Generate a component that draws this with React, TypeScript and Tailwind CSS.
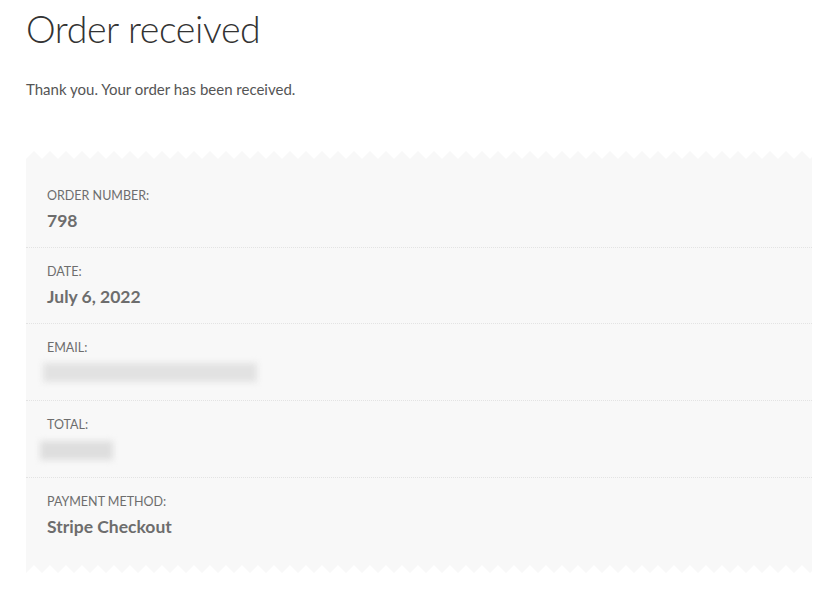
const rows = [
  { label: 'Order number:', value: '798' },
  { label: 'Date:', value: 'July 6, 2022' },
  { label: 'Email:', blur: 'email' },
  { label: 'Total:', blur: 'total' },
  { label: 'Payment method:', value: 'Stripe Checkout' },
];

const Zigzag = ({ flip }: { flip?: boolean }) => (
  <svg className="block w-full h-[8px]" preserveAspectRatio="none">
    <defs>
      <pattern id={flip ? 'zz-bottom' : 'zz-top'} width="16" height="8" patternUnits="userSpaceOnUse">
        {flip ? (
          <path d="M0 0 L16 0 L16 8 L8 0 L0 8 Z" fill="#f8f8f8" />
        ) : (
          <path d="M0 8 L8 0 L16 8 Z" fill="#f8f8f8" />
        )}
      </pattern>
    </defs>
    <rect width="100%" height="8" fill={`url(#${flip ? 'zz-bottom' : 'zz-top'})`} />
  </svg>
);

export default function App() {
  return (
    <div className="min-h-screen bg-white px-[26px] pt-[5px] pr-[21px] font-['Lato',sans-serif]">
      <h1 className="text-[37.5px] leading-[48px] font-light text-[#333333] tracking-[-0.4px]">Order received</h1>
      <p className="mt-[24px] text-[15px] leading-[24px] text-[#555555]">Thank you. Your order has been received.</p>

      <div className="mt-[50px]">
        <Zigzag />
        <ul className="bg-[#f8f8f8] pt-[13px] pb-[12px]">
          {rows.map((r, i) => (
            <li
              key={r.label}
              className={`px-[21px] pt-[15px] pb-[15px] ${i < rows.length - 1 ? 'border-b border-dotted border-[#e3e3e3]' : ''}`}
            >
              <div className="text-[12.5px] leading-[18px] uppercase text-[#6d6d6d]">{r.label}</div>
              {r.value && (
                <div className="mt-[5px] text-[17.5px] leading-[22px] font-bold text-[#6d6d6d]">{r.value}</div>
              )}
              {r.blur === 'email' && (
                <div className="mt-[6px] mb-[3px] -ml-[4px] h-[19px] w-[214px] bg-[#e2e2e2] blur-[3px]" />
              )}
              {r.blur === 'total' && (
                <div className="mt-[7px] mb-[2px] -ml-[7px] h-[19px] w-[73px] bg-[#dedede] blur-[3px]" />
              )}
            </li>
          ))}
        </ul>
        <Zigzag flip />
      </div>
    </div>
  );
}
